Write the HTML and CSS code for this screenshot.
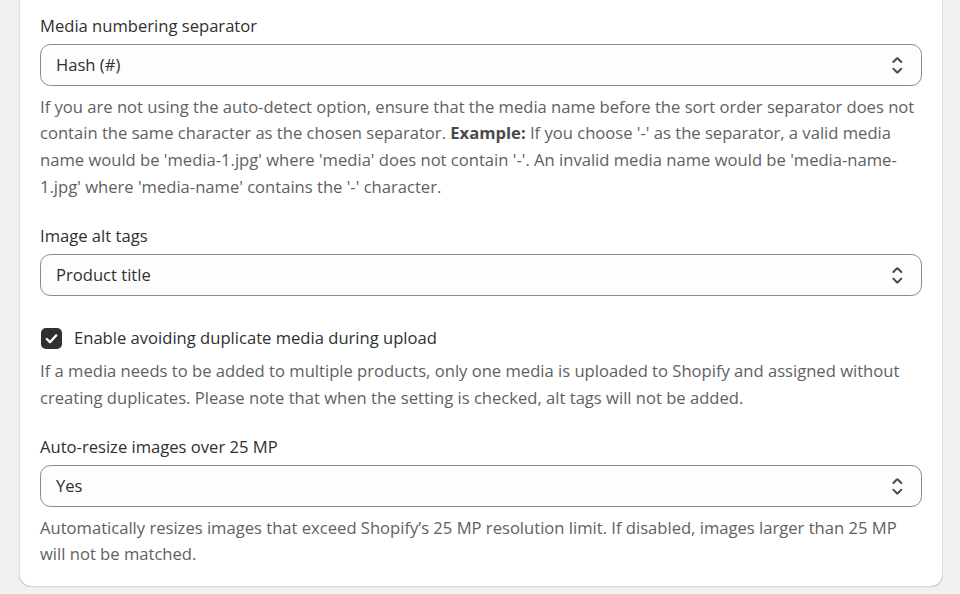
FILE: index.html
```html
<!DOCTYPE html>
<html lang="en">
<head>
<meta charset="utf-8">
<title>Media settings</title>
<link rel="stylesheet" href="styles.css">
</head>
<body>
<div class="card">
  <div class="form">
    <div class="field">
      <label class="label">Media numbering separator</label>
      <div class="select">
        <span class="select-value">Hash (#)</span>
        <svg class="select-icon" viewBox="0 0 20 20" aria-hidden="true"><path d="M10.884 4.323a1.25 1.25 0 0 0-1.768 0l-2.646 2.647a.75.75 0 0 0 1.06 1.06l2.47-2.470 2.47 2.47a.75.75 0 1 0 1.060-1.060l-2.646-2.647Z"/><path d="m13.53 13.03-2.646 2.647a1.25 1.25 0 0 1-1.768 0l-2.646-2.647a.75.75 0 0 1 1.06-1.06l2.47 2.47 2.47-2.47a.75.75 0 0 1 1.06 1.06Z"/></svg>
      </div>
      <p class="help">If you are not using the auto-detect option, ensure that the media name before the sort order separator does not contain the same character as the chosen separator. <strong>Example:</strong> If you choose '-' as the separator, a valid media name would be 'media-1.jpg' where 'media' does not contain '-'. An invalid media name would be 'media-name-1.jpg' where 'media-name' contains the '-' character.</p>
    </div>
    <div class="field">
      <label class="label">Image alt tags</label>
      <div class="select">
        <span class="select-value">Product title</span>
        <svg class="select-icon" viewBox="0 0 20 20" aria-hidden="true"><path d="M10.884 4.323a1.25 1.25 0 0 0-1.768 0l-2.646 2.647a.75.75 0 0 0 1.06 1.06l2.47-2.47 2.47 2.47a.75.75 0 1 0 1.06-1.06l-2.646-2.647Z"/><path d="m13.53 13.03-2.646 2.647a1.25 1.25 0 0 1-1.768 0l-2.646-2.647a.75.75 0 0 1 1.06-1.06l2.47 2.47 2.47-2.47a.75.75 0 0 1 1.06 1.06Z"/></svg>
      </div>
    </div>
    <div class="field field-check">
      <label class="check-row">
        <span class="checkbox">
          <svg viewBox="0 0 20 20" aria-hidden="true"><path d="M5.5 10.5l3 3 6-6.5" fill="none" stroke="#fff" stroke-width="2.2" stroke-linecap="round" stroke-linejoin="round"/></svg>
        </span>
        <span class="check-label">Enable avoiding duplicate media during upload</span>
      </label>
      <p class="help">If a media needs to be added to multiple products, only one media is uploaded to Shopify and assigned without creating duplicates. Please note that when the setting is checked, alt tags will not be added.</p>
    </div>
    <div class="field">
      <label class="label">Auto-resize images over 25 MP</label>
      <div class="select">
        <span class="select-value">Yes</span>
        <svg class="select-icon" viewBox="0 0 20 20" aria-hidden="true"><path d="M10.884 4.323a1.25 1.25 0 0 0-1.768 0l-2.646 2.647a.75.75 0 0 0 1.06 1.06l2.47-2.47 2.47 2.47a.75.75 0 1 0 1.06-1.06l-2.646-2.647Z"/><path d="m13.53 13.03-2.646 2.647a1.25 1.25 0 0 1-1.768 0l-2.646-2.647a.75.75 0 0 1 1.06-1.06l2.47 2.47 2.47-2.47a.75.75 0 0 1 1.06 1.06Z"/></svg>
      </div>
      <p class="help">Automatically resizes images that exceed Shopify’s 25 MP resolution limit. If disabled, images larger than 25 MP will not be matched.</p>
    </div>
  </div>
</div>
</body>
</html>
```
FILE: styles.css
```css
* { box-sizing: border-box; }
html, body { margin: 0; padding: 0; }
body {
  background: #f1f1f1;
  font-family: "Open Sans", "Noto Sans", sans-serif;
  font-size: 16.6px;
  line-height: 26.67px;
  color: #303030;
}
.card {
  width: 924px;
  margin-left: 19px;
  background: #ffffff;
  border-radius: 0 0 13px 13px;
  padding: 13px 21.5px 19px 21px;
  box-shadow: inset 1px 0 0 rgba(0,0,0,0.12), inset -1px 0 0 rgba(0,0,0,0.12), inset 0 -1px 0 rgba(0,0,0,0.16), 0 1px 1px rgba(26,26,26,0.08);
}
.form {
  display: flex;
  flex-direction: column;
  gap: 22.5px;
}
.field {
  display: flex;
  flex-direction: column;
}
.field-check { margin-top: 6.5px; }
.label {
  display: block;
  color: #303030;
}
.select {
  margin-top: 4.5px;
  height: 42px;
  border: 1px solid #8a8a8a;
  border-radius: 10.5px;
  background: #fdfdfd;
  display: flex;
  align-items: center;
  justify-content: space-between;
  padding: 0 9.5px 0 15px;
}
.select-value { color: #303030; }
.select-icon {
  width: 26.67px;
  height: 26.67px;
  fill: #4a4a4a;
}
.help {
  margin: 7.5px 0 0;
  color: #616161;
}
.help strong { font-weight: 700; color: #4a4a4a; }
.check-row {
  display: flex;
  align-items: center;
  gap: 12px;
}
.checkbox {
  width: 21px;
  height: 21px;
  margin-left: 1px;
  border-radius: 5px;
  background: #303030;
  display: flex;
  align-items: center;
  justify-content: center;
}
.checkbox svg { width: 21px; height: 21px; }
.check-label { color: #303030; }
.field-check .help { margin-top: 6.5px; }
```
